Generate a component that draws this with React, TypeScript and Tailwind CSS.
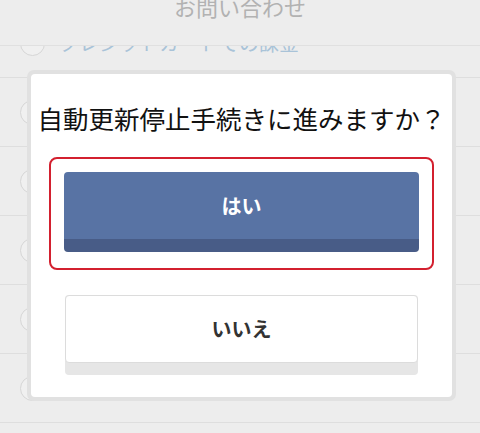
import React from "react";

const rows = [
  "クレジットカードでの課金",
  "キャリア決済での課金",
  "App Storeでの課金",
  "Google Playでの課金",
  "その他の課金",
  "退会について",
];

export default function App() {
  return (
    <div
      className="relative w-[480px] h-[433px] overflow-hidden bg-[#ededed]"
      style={{ fontFamily: '"Noto Sans CJK JP", "Noto Sans", sans-serif' }}
    >
      {/* list behind the dialog */}
      <ul className="pt-[9px]">
        {rows.map((r) => (
          <li
            key={r}
            className="flex h-[69px] items-center gap-[14px] border-b border-[#dedede] pl-[20px]"
          >
            <span className="h-[25px] w-[25px] shrink-0 rounded-full border border-[#d6d6d6] bg-[#f0f0f0]" />
            <span className="text-[20px] text-[#a9c3d8]">{r}</span>
          </li>
        ))}
      </ul>

      {/* sticky header */}
      <div className="absolute left-0 top-0 h-[46px] w-full border-b border-[#e0e0e0] bg-[#ededed]">
        <div className="mt-[-9px] text-center text-[22px] leading-[30px] text-[#b2b2b2]">
          お問い合わせ
        </div>
      </div>

      {/* dialog */}
      <div className="absolute left-[27px] top-[70px] w-[429px] rounded-[7px] bg-[#e1e1e1] p-[4px]">
        <div className="rounded-[4px] bg-white pt-[28px] pb-[22px]">
          <h2 className="text-center text-[25.5px] leading-[32px] font-normal text-[#111]">
            自動更新停止手続きに進みますか？
          </h2>
          <div className="mx-[18px] mt-[23px] rounded-[8px] border-2 border-[#d3202f] px-[13px] pt-[13px] pb-[16px]">
            <button className="flex h-[80px] w-full items-center justify-center rounded-[4px] border-b-[13px] border-[#485c87] bg-[#5873a4] text-[20px] font-bold text-white">
              はい
            </button>
          </div>
          <div className="mx-[34px] mt-[25px] rounded-[4px] bg-[#e6e6e6] pb-[12px]">
            <button className="flex h-[68px] w-full items-center justify-center rounded-[4px] border border-[#dcdcdc] bg-white text-[20px] font-bold text-[#333]">
              いいえ
            </button>
          </div>
        </div>
      </div>
    </div>
  );
}
